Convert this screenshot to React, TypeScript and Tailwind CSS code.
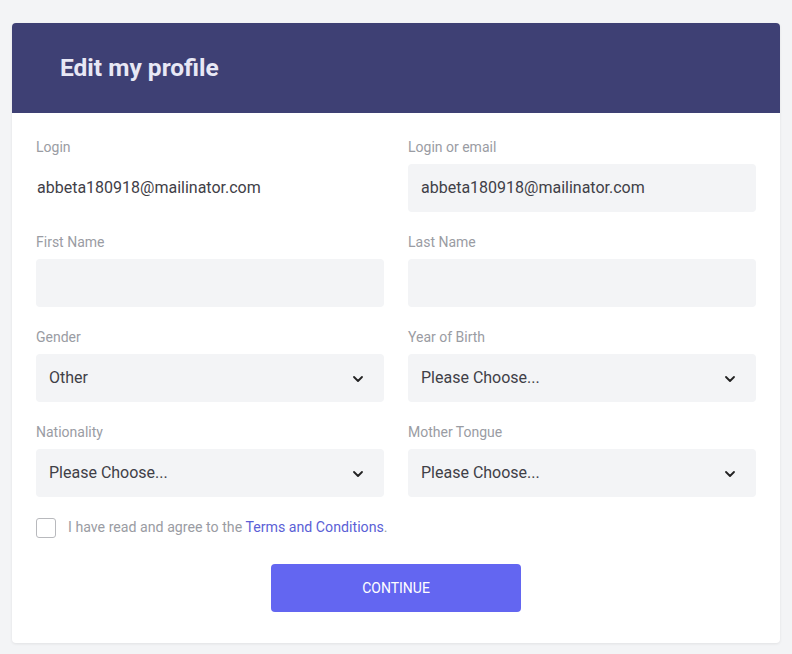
import { ChevronDown } from 'lucide-react'

type FieldProps = {
  label: string
  children: React.ReactNode
}

function Field({ label, children }: FieldProps) {
  return (
    <div className="flex flex-col">
      <label className="mb-2 h-[17px] text-[14px] leading-[17px] text-[#9a9ca3]">{label}</label>
      {children}
    </div>
  )
}

function Select({ value }: { value: string }) {
  return (
    <div className="flex h-12 items-center justify-between rounded-[4px] bg-[#f3f4f6] pl-[13px] pr-[18px] text-[16px] text-[#3f4047]">
      <span>{value}</span>
      <ChevronDown size={16} strokeWidth={2.75} className="mt-px text-[#222]" />
    </div>
  )
}

function Input({ value }: { value?: string }) {
  return (
    <div className="flex h-12 items-center rounded-[4px] bg-[#f3f4f6] px-[13px] text-[16px] text-[#3f4047]">
      {value}
    </div>
  )
}

export default function App() {
  return (
    <div className="min-h-screen bg-[#f3f4f6] px-3 pt-[23px] font-['Roboto','Liberation_Sans',sans-serif]">
      <div className="overflow-hidden rounded-[4px] bg-white shadow-[0_1px_3px_rgba(0,0,0,0.08)]">
        <div className="flex h-[90px] items-center bg-[#3e4074] px-12">
          <h1 className="text-[24.5px] font-bold text-[#e8e8f5]">Edit my profile</h1>
        </div>
        <div className="px-6 pb-[31px] pt-[26px]">
          <div className="grid grid-cols-2 gap-x-6 gap-y-[22px]">
            <Field label="Login">
              <div className="flex h-12 items-center pl-px text-[16px] text-[#3f4047]">abbeta180918@mailinator.com</div>
            </Field>
            <Field label="Login or email">
              <Input value="abbeta180918@mailinator.com" />
            </Field>
            <Field label="First Name">
              <Input />
            </Field>
            <Field label="Last Name">
              <Input />
            </Field>
            <Field label="Gender">
              <Select value="Other" />
            </Field>
            <Field label="Year of Birth">
              <Select value="Please Choose..." />
            </Field>
            <Field label="Nationality">
              <Select value="Please Choose..." />
            </Field>
            <Field label="Mother Tongue">
              <Select value="Please Choose..." />
            </Field>
          </div>
          <div className="mt-[21px] flex h-5 items-center gap-3">
            <span className="h-5 w-5 rounded-[3px] border border-[#b8b9bd] bg-white" />
            <span className="text-[14.2px] text-[#9a9ca3]">
              I have read and agree to the <a className="text-[#5b5fd6]">Terms and Conditions</a>.
            </span>
          </div>
          <div className="mt-[26px] flex justify-center">
            <button className="h-12 w-[250px] rounded-[4px] bg-[#6366f1] text-[14px] font-normal text-white">
              CONTINUE
            </button>
          </div>
        </div>
      </div>
    </div>
  )
}
